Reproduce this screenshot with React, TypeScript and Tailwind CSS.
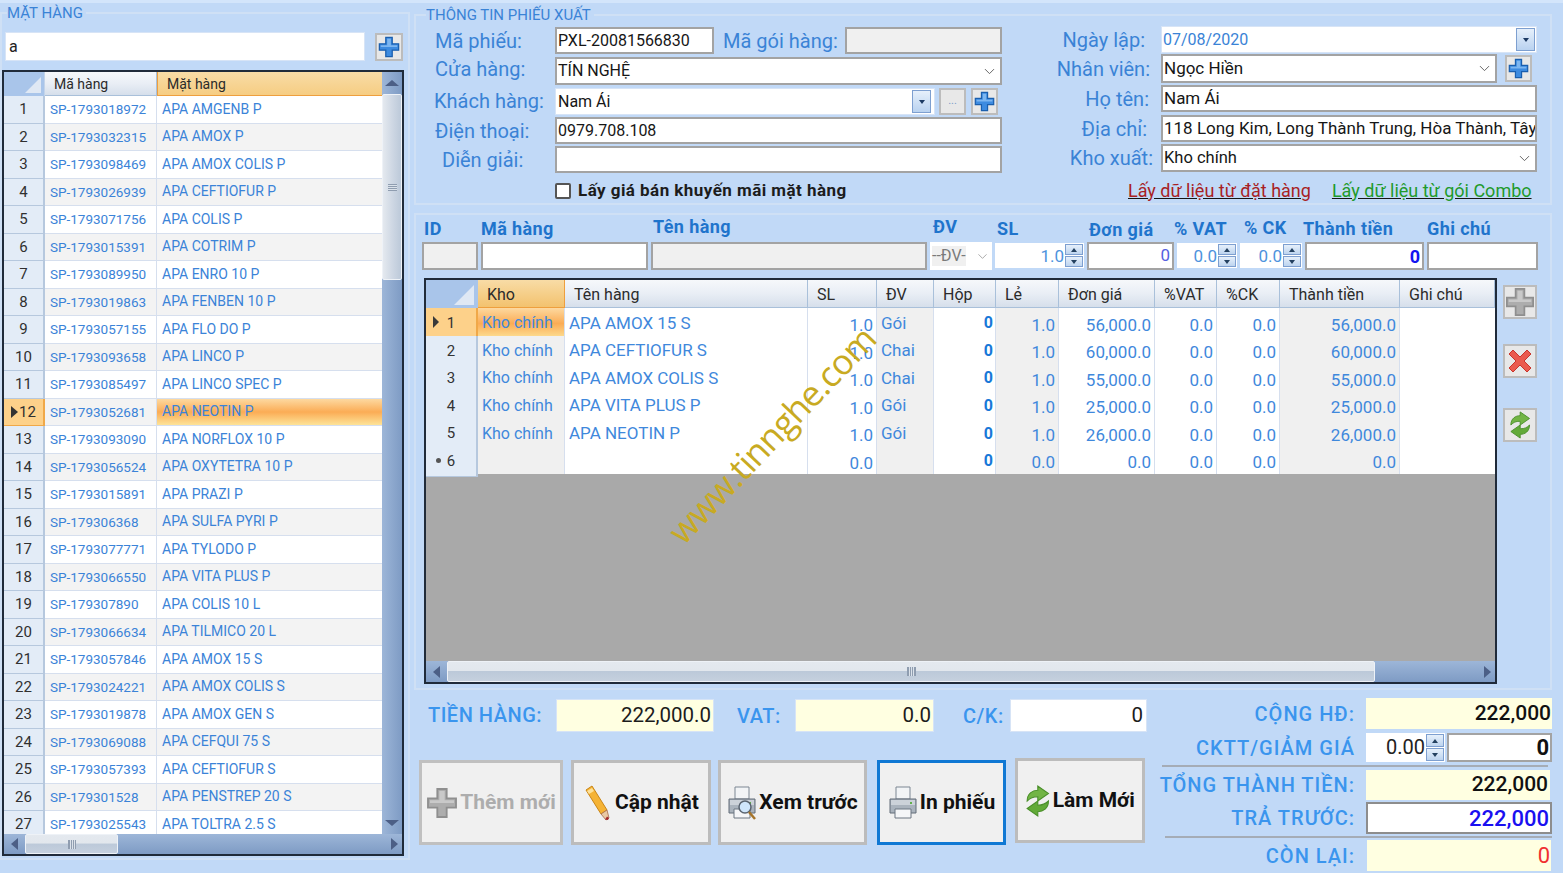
import { ChevronDown } from "lucide-react";
import type { ReactNode } from "react";

const products: [string, string][] = [
  ["SP-1793018972", "APA AMGENB P"],
  ["SP-1793032315", "APA AMOX P"],
  ["SP-1793098469", "APA AMOX COLIS P"],
  ["SP-1793026939", "APA CEFTIOFUR P"],
  ["SP-1793071756", "APA COLIS P"],
  ["SP-1793015391", "APA COTRIM P"],
  ["SP-1793089950", "APA ENRO 10 P"],
  ["SP-1793019863", "APA FENBEN 10 P"],
  ["SP-1793057155", "APA FLO DO P"],
  ["SP-1793093658", "APA LINCO P"],
  ["SP-1793085497", "APA LINCO SPEC P"],
  ["SP-1793052681", "APA NEOTIN P"],
  ["SP-1793093090", "APA NORFLOX 10 P"],
  ["SP-1793056524", "APA OXYTETRA 10 P"],
  ["SP-1793015891", "APA PRAZI P"],
  ["SP-179306368", "APA SULFA PYRI P"],
  ["SP-1793077771", "APA TYLODO P"],
  ["SP-1793066550", "APA VITA PLUS P"],
  ["SP-179307890", "APA COLIS 10 L"],
  ["SP-1793066634", "APA TILMICO 20 L"],
  ["SP-1793057846", "APA AMOX 15 S"],
  ["SP-1793024221", "APA AMOX COLIS S"],
  ["SP-1793019878", "APA AMOX GEN S"],
  ["SP-1793069088", "APA CEFQUI 75 S"],
  ["SP-1793057393", "APA CEFTIOFUR S"],
  ["SP-179301528", "APA PENSTREP 20 S"],
  ["SP-1793025543", "APA TOLTRA 2.5 S"],
];

const lines = [
  ["Kho chính", "APA AMOX 15 S", "1.0", "Gói", "0", "1.0", "56,000.0", "0.0", "0.0", "56,000.0"],
  ["Kho chính", "APA CEFTIOFUR S", "1.0", "Chai", "0", "1.0", "60,000.0", "0.0", "0.0", "60,000.0"],
  ["Kho chính", "APA AMOX COLIS S", "1.0", "Chai", "0", "1.0", "55,000.0", "0.0", "0.0", "55,000.0"],
  ["Kho chính", "APA VITA PLUS P", "1.0", "Gói", "0", "1.0", "25,000.0", "0.0", "0.0", "25,000.0"],
  ["Kho chính", "APA NEOTIN P", "1.0", "Gói", "0", "1.0", "26,000.0", "0.0", "0.0", "26,000.0"],
  ["", "", "0.0", "", "0", "0.0", "0.0", "0.0", "0.0", "0.0"],
];

const lineHeaders = ["Kho", "Tên hàng", "SL", "ĐV", "Hộp", "Lẻ", "Đơn giá", "%VAT", "%CK", "Thành tiền", "Ghi chú"];
const entryLabels: [string, string][] = [
  ["ID", "pl-[2px]"],
  ["Mã hàng", ""],
  ["Tên hàng", "pl-[2px] -mt-[2px]"],
  ["ĐV", "pl-[3px] -mt-[2px]"],
  ["SL", "pl-[2px]"],
  ["Đơn giá", "pl-[2px] mt-[1px]"],
  ["% VAT", "-ml-[3px]"],
  ["% CK", "pl-[4px] -mt-[1px]"],
  ["Thành tiền", "-ml-[2px]"],
  ["Ghi chú", ""],
];

const tableCols = "grid grid-cols-[52px_87px_243px_69px_57px_62px_63px_96px_62px_63px_120px_95px]";
const headerBg = "bg-[linear-gradient(#f6f8fb,#e9eef5_50%,#d6dfeb)]";
const selectedBg = "bg-[linear-gradient(#fdd9a0,#fbac55_50%,#fde398)]";
const field = "border-2 border-[#a3a3a3] bg-white flex items-center px-[1px]";
const fieldLabel = "text-[20px] leading-none text-[#3a83d6]";
const totalLabel = "flex items-center text-[20px] font-medium tracking-[0.5px] text-[#3a95ee]";

function PlusIcon({ gray = false, size = 24 }: { gray?: boolean; size?: number }) {
  return (
    <svg width={size} height={size} viewBox="0 0 24 24">
      <path
        d="M8.5 1.5h7v7h7v7h-7v7h-7v-7h-7v-7h7z"
        fill={gray ? "#adadad" : "#3d8be0"}
        stroke={gray ? "#8f8f8f" : "#1b5fae"}
        strokeWidth="1.4"
      />
      <path d="M10 3h4v7h7v2H3v-2h7z" fill={gray ? "#c9c9c9" : "#7db6f0"} />
    </svg>
  );
}

function RefreshIcon({ size = 30 }: { size?: number }) {
  return (
    <svg width={size * 0.8} height={size} viewBox="0 0 24 30">
      <path d="M2 15C2 8 7 5 12 5V1l10 7-10 7v-4c-5 0-7 1-10 4z" fill="#72b545" stroke="#4a8f2a" strokeWidth="1" />
      <path d="M22 15c0 7-5 10-10 10v4L2 22l10-7v4c5 0 7-1 10-4z" fill="#62aa38" stroke="#4a8f2a" strokeWidth="1" />
    </svg>
  );
}

function PencilIcon() {
  return (
    <svg width="30" height="36" viewBox="0 0 30 36">
      <path d="M3 5l6-4 15 24-6 4z" fill="#f5b335" stroke="#c98516" strokeWidth="1" />
      <path d="M4 6l5-3 2 3-5 3z" fill="#fde19a" />
      <path d="M18 29l6-4 2 8-3 2z" fill="#e9c9a4" stroke="#a56a4a" strokeWidth="0.8" />
      <path d="M24 31.5l2 1.5-1 2-3-0.5z" fill="#a5282c" />
    </svg>
  );
}

function PrinterIcon({ lens = false }: { lens?: boolean }) {
  return (
    <svg width="30" height="36" viewBox="0 0 30 36">
      <path d="M8 2h14v12H8z" fill="#f2f4f6" stroke="#7d8793" />
      <path d="M2 14h26v14H2z" fill="#aab3bd" stroke="#626c78" />
      <path d="M3 15h24v5H3z" fill="#ccd2d9" />
      <path d="M7 24h16v9H7z" fill="#f5f6f8" stroke="#6d7682" />
      <path d="M22 17h2v2h-2z" fill="#62b04a" />
      {lens && (
        <>
          <circle cx="18" cy="22" r="6" fill="#cfe6fb" stroke="#5a6470" strokeWidth="1.5" />
          <path d="M22 27l6 7" stroke="#a5742a" strokeWidth="2.5" />
        </>
      )}
    </svg>
  );
}

function ToolSquare({ className, children }: { className: string; children: ReactNode }) {
  return (
    <button className={`border-2 border-[#bcbcbc] bg-[#e8e8e8] flex items-center justify-center shrink-0 ${className}`}>
      {children}
    </button>
  );
}

function DropButton({ className = "" }: { className?: string }) {
  return (
    <div className={`w-[19px] h-[23px] border border-[#7d9fd0] bg-[linear-gradient(#e6f0fb,#b9d2f0)] flex items-center justify-center shrink-0 ${className}`}>
      <div className="w-0 h-0 border-x-[3px] border-x-transparent border-t-[4px] border-t-[#1c3a63]" />
    </div>
  );
}

function Spinner({ className = "" }: { className?: string }) {
  return (
    <div className={`w-[18px] flex flex-col gap-[1px] shrink-0 ${className}`}>
      <div className="flex-1 border border-[#7d9fd0] bg-[linear-gradient(#e6f0fb,#bdd4ef)] flex items-center justify-center">
        <div className="w-0 h-0 border-x-[3px] border-x-transparent border-b-[4px] border-b-[#23405f]" />
      </div>
      <div className="flex-1 border border-[#7d9fd0] bg-[linear-gradient(#e6f0fb,#bdd4ef)] flex items-center justify-center">
        <div className="w-0 h-0 border-x-[3px] border-x-transparent border-t-[4px] border-t-[#23405f]" />
      </div>
    </div>
  );
}

function SpinField({ value, className = "" }: { value: string; className?: string }) {
  return (
    <div className={`bg-white h-[25px] mt-[1px] flex items-stretch p-[1px] text-[17px] text-[#4d93dd] ${className}`}>
      <span className="flex-1 text-right leading-[24px]">{value}</span>
      <Spinner className="ml-[1px]" />
    </div>
  );
}

function Combo({ value, className }: { value: string; className: string }) {
  return (
    <div className={`${field} justify-between ${className}`}>
      <span>{value}</span>
      <ChevronDown size={17} strokeWidth={1.3} className="text-[#5a5a5a] mr-[1px]" />
    </div>
  );
}

function ScrollArrow({ dir }: { dir: "left" | "right" | "up" | "down" }) {
  const cls = {
    left: "border-y-[6px] border-y-transparent border-r-[7px] border-r-[#4c5f86]",
    right: "border-y-[6px] border-y-transparent border-l-[7px] border-l-[#4c5f86]",
    up: "border-x-[7px] border-x-transparent border-b-[6px] border-b-[#4c5f86]",
    down: "border-x-[7px] border-x-transparent border-t-[6px] border-t-[#4c5f86]",
  }[dir];
  return <div className={`w-0 h-0 ${cls}`} />;
}

function HScroll({ className, thumb, grip }: { className: string; thumb: string; grip: string }) {
  return (
    <div className={`flex items-stretch bg-[linear-gradient(#9db6d8,#7e9bc4)] shrink-0 ${className}`}>
      <div className="w-[21px] flex items-center justify-center shrink-0">
        <ScrollArrow dir="left" />
      </div>
      <div className={`${thumb} border border-[#eef2f7] rounded-[2px] bg-[linear-gradient(#e4e9ef,#e2e7ed_45%,#bcc9d9_50%,#c5d0de)] flex items-center justify-center`}>
        <div className={`${grip} h-[9px] border-x border-[#8f9db0] bg-[repeating-linear-gradient(90deg,#8f9db0_0,#8f9db0_1px,#dbe2ea_1px,#dbe2ea_2px)]`} />
      </div>
      <div className="flex-1 flex items-center justify-end pr-[4px]">
        <ScrollArrow dir="right" />
      </div>
    </div>
  );
}

function ProductGrid() {
  return (
    <div className="mt-[9px] w-[402px] h-[786px] border-2 border-[#202b3a] flex flex-col overflow-hidden">
      <div className="flex flex-1 min-h-0">
        <div className="w-[378px] flex flex-col overflow-hidden">
          <div className="grid grid-cols-[41px_112px_225px] h-[24px] shrink-0 text-[14px] text-[#2a2a2a]">
            <div className="bg-[#a9c5ea] border-r border-[#c3d4ea] relative overflow-hidden">
              <div className="absolute right-[3px] bottom-[3px] w-0 h-0 border-l-[16px] border-l-transparent border-b-[16px] border-b-[#dfe8f4]" />
            </div>
            <div className={`${headerBg} border-r border-b border-[#a9c0da] pl-[9px] pt-[2px] flex items-center`}>Mã hàng</div>
            <div className="bg-[linear-gradient(#f8dca6,#f6cd83)] border-b border-l border-[#ee9f3e] pl-[9px] pt-[2px] flex items-center">Mặt hàng</div>
          </div>
          {products.map(([code, name], i) => {
            const selected = i === 11;
            return (
              <div key={code + i} className="grid grid-cols-[41px_112px_225px] h-[27.5px] shrink-0 text-[14px] text-[#3b83d8]">
                <div className={`flex items-center justify-center border-r-2 border-b text-[15px] text-[#303030] ${selected ? "bg-[#fdd18a] border-[#f0a848]" : "bg-[#e3ecf7] border-[#b6c8de]"}`}>
                  {selected && <div className="w-0 h-0 border-y-[6px] border-y-transparent border-l-[7px] border-l-[#333] mr-[1px]" />}
                  {i + 1}
                </div>
                <div className={`flex items-center pl-[5px] text-[13.5px] border-r border-b border-[#d6dfee] ${i % 2 ? "bg-[#f3f3f3]" : "bg-white"}`}>{code}</div>
                <div className={`flex items-center pl-[5px] border-b border-[#d6dfee] ${selected ? selectedBg : i % 2 ? "bg-[#f3f3f3]" : "bg-white"}`}>{name}</div>
              </div>
            );
          })}
        </div>
        <div className="w-[20px] bg-[linear-gradient(90deg,#9db6d8,#7e9bc4)] flex flex-col items-center">
          <div className="h-[22px] flex items-center justify-center shrink-0">
            <ScrollArrow dir="up" />
          </div>
          <div className="h-[186px] w-full border border-[#eef2f7] rounded-[2px] bg-[linear-gradient(90deg,#e4e9ef,#cfd8e4_50%,#bcc9d9)] flex items-center justify-center">
            <div className="w-[9px] h-[7px] bg-[repeating-linear-gradient(#8f9db0_0,#8f9db0_1px,#dbe2ea_1px,#dbe2ea_2px)]" />
          </div>
          <div className="flex-1" />
          <div className="h-[22px] flex items-center justify-center shrink-0">
            <ScrollArrow dir="down" />
          </div>
        </div>
      </div>
      <HScroll className="h-[20px]" thumb="w-[93px]" grip="w-[8px]" />
    </div>
  );
}

function LinesGrid() {
  return (
    <div className="relative w-[1073px] h-[406px] border-2 border-[#202b3a] flex flex-col">
      <div className={`${tableCols} h-[28px] shrink-0 text-[16px] text-[#2b2b2b]`}>
        <div className="bg-[#a9c5ea] relative overflow-hidden">
          <div className="absolute right-[4px] bottom-[3px] w-0 h-0 border-l-[20px] border-l-transparent border-b-[20px] border-b-[#dfe8f4]" />
        </div>
        {lineHeaders.map((h, i) => (
          <div
            key={h}
            className={`flex items-center pt-[3px] border-r border-b border-[#a9c0da] ${i === 0 ? "bg-[linear-gradient(#f8dca6,#f3c26e)] pl-[9px] border-[#ee9f3e]" : `${headerBg} pl-[9px]`}`}
          >
            {h}
          </div>
        ))}
      </div>
      {lines.map((row, r) => (
        <div key={r} className={`${tableCols} h-[27.6px] shrink-0 text-[16px] text-[#3f88dc]`}>
          <div className={`relative flex items-center justify-center border-r-2 border-b text-[15px] text-[#333] ${r === 0 ? "bg-[#fdd18a] border-[#f0a848]" : "bg-[#e3ecf7] border-[#b6c8de]"}`}>
            {r === 0 && <div className="absolute left-[7px] top-[8px] w-0 h-0 border-y-[6px] border-y-transparent border-l-[6px] border-l-[#3a3a3a]" />}
            {r === 5 && <div className="absolute left-[10px] top-[12px] w-[5px] h-[5px] rounded-full bg-[#555]" />}
            {r + 1}
          </div>
          <div className={`flex items-center pl-[4px] border-r border-b border-[#d6dfee] ${r === 0 ? selectedBg : "bg-[#f0f0f0]"}`}>{row[0]}</div>
          <div className="flex items-center pl-[4px] bg-white border-r border-b border-[#d6dfee] text-[17px]">{row[1]}</div>
          <div className="flex items-center justify-end pr-[3px] pt-[5px] bg-white border-r border-b border-[#d6dfee] text-[17px]">{row[2]}</div>
          <div className="flex items-center pl-[4px] bg-[#f0f0f0] border-r border-b border-[#d6dfee] text-[17px]">{row[3]}</div>
          <div className="flex items-center justify-end pr-[2px] bg-white border-r border-b border-[#d6dfee] font-bold text-[#1878d8]">{row[4]}</div>
          <div className="flex items-center justify-end pr-[3px] pt-[4px] bg-[#f0f0f0] border-r border-b border-[#d6dfee] text-[17px]">{row[5]}</div>
          <div className="flex items-center justify-end pr-[3px] pt-[4px] bg-white border-r border-b border-[#d6dfee] text-[17px]">{row[6]}</div>
          <div className="flex items-center justify-end pr-[3px] pt-[4px] bg-white border-r border-b border-[#d6dfee] text-[17px]">{row[7]}</div>
          <div className="flex items-center justify-end pr-[3px] pt-[4px] bg-white border-r border-b border-[#d6dfee] text-[17px]">{row[8]}</div>
          <div className="flex items-center justify-end pr-[3px] pt-[4px] bg-[#f0f0f0] border-r border-b border-[#d6dfee] text-[17px]">{row[9]}</div>
          <div className="bg-white border-b border-[#d6dfee]" />
        </div>
      ))}
      <div className="flex-1 bg-[#a9a9a9]" />
      <HScroll className="h-[21px]" thumb="w-[928px]" grip="w-[9px]" />
      <div className="absolute left-[204px] top-[137px] text-[35px] leading-none font-normal text-[#c8aa22] whitespace-nowrap tracking-[-0.8px] rotate-[-46.5deg] [font-family:'Open_Sans',sans-serif]">
        www.tinnghe.com
      </div>
    </div>
  );
}

function ActionButton({ className, disabled, children, label }: { className: string; disabled?: boolean; children: ReactNode; label: string }) {
  return (
    <button className={`h-[85px] border-[3px] bg-[#f0f0f0] flex items-center justify-center gap-[2px] shrink-0 text-[21px] font-bold ${disabled ? "text-[#adadad]" : "text-[#111]"} ${className}`}>
      {children}
      <span>{label}</span>
    </button>
  );
}

function TotalRow({ label, className, children }: { label: string; className: string; children: ReactNode }) {
  return (
    <div className={`flex items-stretch ${className}`}>
      <div className="w-[195px] shrink-0 flex items-center justify-end whitespace-nowrap text-[20px] font-medium tracking-[1px] text-[#3a95ee]">{label}</div>
      {children}
    </div>
  );
}

export default function App() {
  return (
    <div className="w-[1563px] h-[873px] overflow-hidden flex bg-[#c1d9f7] text-[#161616] [font-family:Roboto,sans-serif] border-t-[3px] border-[#d3e5fb]">
      <fieldset className="mt-[1px] w-[410px] h-[856px] border-2 border-[#cfe0f5] shrink-0">
        <legend className="ml-[5px] h-[18px] text-[15px] leading-[18px] text-[#3a83d6] pr-[3px]">MẶT HÀNG</legend>
        <div className="flex items-center mt-[10px] pl-[3px]">
          <div className="w-[360px] h-[29px] bg-white border border-[#d7e4f6] flex items-center pl-[3px] text-[16px] text-[#222]">a</div>
          <ToolSquare className="ml-[10px] w-[28px] h-[28px]">
            <PlusIcon size={22} />
          </ToolSquare>
        </div>
        <ProductGrid />
      </fieldset>

      <div className="ml-[4px] w-[1138px] shrink-0 flex flex-col">
        <fieldset className="mt-[3px] h-[199px] border-2 border-[#cfe0f5] shrink-0">
          <legend className="ml-[10px] h-[18px] text-[15px] leading-[18px] text-[#3a83d6] pr-[3px]">THÔNG TIN PHIẾU XUẤT</legend>
          <div className="flex">
            <div className="w-[586px] shrink-0 flex flex-col pt-[3px] text-[16px]">
              <div className="h-[27px] flex items-center">
                <div className={`w-[139px] pl-[19px] ${fieldLabel}`}>Mã phiếu:</div>
                <div className={`${field} w-[159px] h-full`}>PXL-20081566830</div>
                <div className={`w-[131px] pl-[9px] ${fieldLabel}`}>Mã gói hàng:</div>
                <div className="w-[157px] h-full border-2 border-[#a3a3a3] bg-[#f0f0f0]" />
              </div>
              <div className="h-[28px] mt-[3px] flex items-center">
                <div className={`w-[139px] pl-[19px] -mt-[5px] ${fieldLabel}`}>Cửa hàng:</div>
                <Combo value="TÍN NGHỆ" className="w-[447px] h-full" />
              </div>
              <div className="h-[27px] mt-[3px] flex items-center">
                <div className={`w-[139px] pl-[18px] -mt-[2px] ${fieldLabel}`}>Khách hàng:</div>
                <div className="w-[380px] h-full bg-white border border-[#d7e4f6] flex items-center justify-between pl-[2px] pr-[3px]">
                  <span>Nam Ái</span>
                  <DropButton />
                </div>
                <ToolSquare className="ml-[4px] w-[27px] h-[27px] text-[11px] text-[#7c9cc8]">...</ToolSquare>
                <ToolSquare className="ml-[5px] w-[27px] h-[27px]">
                  <PlusIcon size={21} />
                </ToolSquare>
              </div>
              <div className="h-[27px] mt-[2px] flex items-center">
                <div className={`w-[139px] pl-[19px] ${fieldLabel}`}>Điện thoại:</div>
                <div className={`${field} w-[447px] h-full`}>0979.708.108</div>
              </div>
              <div className="h-[27px] mt-[2px] flex items-center">
                <div className={`w-[139px] pl-[26px] ${fieldLabel}`}>Diễn giải:</div>
                <div className={`${field} w-[447px] h-full`} />
              </div>
              <div className="h-[17px] mt-[9px] flex items-center pl-[139px]">
                <div className="w-[16px] h-[16px] border-2 border-[#555] rounded-[2px] bg-white" />
                <span className="ml-[7px] whitespace-nowrap text-[17px] font-bold tracking-[0.45px] text-[#1c1c1c]">Lấy giá bán khuyến mãi mặt hàng</span>
              </div>
            </div>

            <div className="flex-1 flex flex-col pt-[2px] text-[17px]">
              <div className="h-[27px] flex items-center">
                <div className={`w-[159px] pr-[16px] text-right ${fieldLabel}`}>Ngày lập:</div>
                <div className="w-[376px] h-full bg-white border border-[#d7e4f6] flex items-center justify-between pl-[1px] pr-[1px] text-[16px] text-[#3a83d6]">
                  <span>07/08/2020</span>
                  <DropButton />
                </div>
              </div>
              <div className="h-[29px] mt-[1px] flex items-center">
                <div className={`w-[159px] pr-[11px] text-right ${fieldLabel}`}>Nhân viên:</div>
                <Combo value="Ngọc Hiền" className="w-[336px] h-full" />
                <ToolSquare className="ml-[8px] w-[27px] h-[27px]">
                  <PlusIcon size={21} />
                </ToolSquare>
              </div>
              <div className="h-[27px] mt-[2px] flex items-center">
                <div className={`w-[159px] pr-[12px] text-right ${fieldLabel}`}>Họ tên:</div>
                <div className={`${field} w-[376px] h-full`}>Nam Ái</div>
              </div>
              <div className="h-[27px] mt-[3px] flex items-center">
                <div className={`w-[159px] pr-[14px] text-right ${fieldLabel}`}>Địa chỉ:</div>
                <div className={`${field} w-[376px] h-full overflow-hidden whitespace-nowrap`}>118 Long Kim, Long Thành Trung, Hòa Thành, Tây Ninh</div>
              </div>
              <div className="h-[28px] mt-[2px] flex items-center">
                <div className={`w-[159px] pr-[8px] text-right ${fieldLabel}`}>Kho xuất:</div>
                <Combo value="Kho chính" className="w-[376px] h-full text-[16.5px]" />
              </div>
              <div className="h-[20px] mt-[8px] flex items-center whitespace-nowrap text-[18px] underline">
                <span className="ml-[126px] text-[#a81f24]">Lấy dữ liệu từ đặt hàng</span>
                <span className="ml-[21px] text-[#1f9a2b]">Lấy dữ liệu từ gói Combo</span>
              </div>
            </div>
          </div>
        </fieldset>

        <div className="mt-[8px] h-[477px] border-2 border-[#cfe0f5] shrink-0 pl-[6px] pt-[1px]">
          <div className="grid grid-cols-[56px_167px_276px_62px_89px_87px_60px_62px_119px_111px] gap-x-[3px]">
            {entryLabels.map(([label, cls]) => (
              <div key={label} className={`h-[25px] flex items-center whitespace-nowrap text-[18px] font-bold tracking-[0.4px] text-[#1f74cc] ${cls}`}>
                {label}
              </div>
            ))}
            <div className="h-[28px] border-2 border-[#a3a3a3] bg-[#f0f0f0]" />
            <div className={`${field} h-[28px]`} />
            <div className="h-[28px] border-2 border-[#a3a3a3] bg-[#f0f0f0]" />
            <div className="h-[28px] bg-white flex items-center justify-between pl-[2px] pr-[2px] text-[16px] text-[#7a7a7a]">
              <span className="bg-[#f0f0f0] h-[20px] leading-[20px]">--ĐV-</span>
              <ChevronDown size={15} strokeWidth={1.2} className="text-[#909090]" />
            </div>
            <SpinField value="1.0" />
            <div className={`${field} h-[28px] justify-end pr-[2px] text-[17px] text-[#5560e0]`}>0</div>
            <SpinField value="0.0" />
            <SpinField value="0.0" />
            <div className={`${field} h-[28px] justify-end pr-[2px] text-[18px] font-bold text-[#1414f0]`}>0</div>
            <div className={`${field} h-[28px]`} />
          </div>
          <div className="mt-[8px] ml-[2px] flex">
            <LinesGrid />
            <div className="ml-[6px] flex flex-col">
              <ToolSquare className="mt-[7px] w-[34px] h-[34px]">
                <PlusIcon gray size={30} />
              </ToolSquare>
              <ToolSquare className="mt-[25px] w-[34px] h-[34px]">
                <svg width="26" height="26" viewBox="0 0 26 26">
                  <path d="M2 6l4-4 7 7 7-7 4 4-7 7 7 7-4 4-7-7-7 7-4-4 7-7z" fill="#ea5a4e" stroke="#c9342c" strokeWidth="1" />
                </svg>
              </ToolSquare>
              <ToolSquare className="mt-[30px] w-[34px] h-[34px]">
                <RefreshIcon size={28} />
              </ToolSquare>
            </div>
          </div>
        </div>

        <div className="flex">
          <div className="w-[746px] shrink-0">
            <div className="mt-[9px] h-[33px] flex items-stretch text-[20.5px] text-[#1c1c1c]">
              <div className={`w-[142px] pl-[14px] -mt-[1px] whitespace-nowrap ${totalLabel}`}>TIỀN HÀNG:</div>
              <div className="w-[158px] bg-[#ffffe1] border border-[#d7e4f6] flex items-center justify-end pr-[2px]">222,000.0</div>
              <div className={`w-[81px] pl-[23px] ${totalLabel}`}>VAT:</div>
              <div className="w-[139px] bg-[#ffffe1] border border-[#d7e4f6] flex items-center justify-end pr-[2px]">0.0</div>
              <div className={`w-[76px] pl-[29px] ${totalLabel}`}>C/K:</div>
              <div className="w-[137px] bg-white border border-[#d7e4f6] flex items-center justify-end pr-[3px]">0</div>
            </div>
            <div className="mt-[28px] flex items-start">
              <ActionButton disabled className="ml-[5px] w-[144px] border-[#c0c0c0]" label="Thêm mới">
                <PlusIcon gray size={32} />
              </ActionButton>
              <ActionButton className="ml-[8px] w-[140px] border-[#bcbcbc]" label="Cập nhật">
                <PencilIcon />
              </ActionButton>
              <ActionButton className="ml-[7px] w-[149px] border-[#bcbcbc]" label="Xem trước">
                <PrinterIcon lens />
              </ActionButton>
              <ActionButton className="ml-[10px] w-[129px] border-[#0f78d4]" label="In phiếu">
                <PrinterIcon />
              </ActionButton>
              <ActionButton className="ml-[9px] w-[130px] -mt-[2px] border-[#bcbcbc]" label="Làm Mới">
                <RefreshIcon size={32} />
              </ActionButton>
            </div>
          </div>

          <div className="w-[392px] shrink-0 flex flex-col">
            <TotalRow label="CỘNG HĐ:" className="mt-[8px] h-[31px]">
              <div className="ml-[11px] w-[186px] bg-[#ffffe1] flex items-center justify-end pr-[1px] text-[21px] font-medium text-[#111]">222,000</div>
            </TotalRow>
            <TotalRow label="CKTT/GIẢM GIÁ" className="mt-[4px] h-[29px]">
              <div className="ml-[11px] w-[79px] bg-white flex items-stretch p-[1px] text-[20px] text-[#222]">
                <span className="flex-1 text-right leading-[27px]">0.00</span>
                <Spinner className="ml-[1px]" />
              </div>
              <div className="ml-[2px] w-[105px] border-2 border-[#a3a3a3] bg-white flex items-center justify-end pr-[1px] text-[22px] font-bold text-[#111]">0</div>
            </TotalRow>
            <div className="mt-[3px] ml-[2px] w-[386px] h-[2px] bg-[#a5acb6]" />
            <TotalRow label="TỔNG THÀNH TIỀN:" className="mt-[3px] h-[30px]">
              <div className="ml-[11px] w-[184px] bg-[#ffffe1] flex items-center justify-end pr-[2px] text-[21px] font-medium text-[#111]">222,000</div>
            </TotalRow>
            <TotalRow label="TRẢ TRƯỚC:" className="mt-[2px] h-[32px]">
              <div className="ml-[11px] w-[186px] border-2 border-[#8d8d8d] bg-white flex items-center justify-end pr-[1px] text-[22px] font-medium text-[#1a10f0]">222,000</div>
            </TotalRow>
            <div className="mt-[2px] ml-[5px] w-[387px] h-[2px] bg-[#a5acb6]" />
            <TotalRow label="CÒN LẠI:" className="mt-[2px] h-[31px]">
              <div className="ml-[12px] w-[184px] bg-[#ffffe1] flex items-center justify-end pr-[1px] text-[22px] text-[#f03030]">0</div>
            </TotalRow>
          </div>
        </div>
      </div>
    </div>
  );
}
